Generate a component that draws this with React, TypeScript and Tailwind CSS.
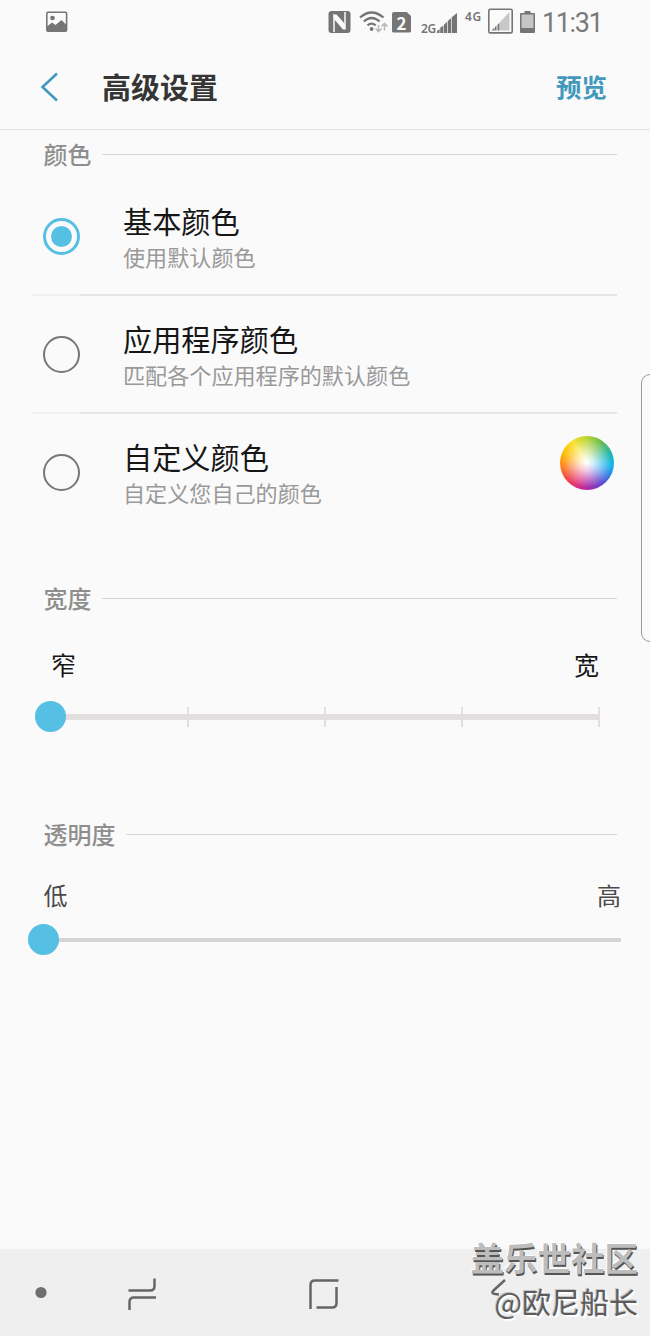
import clsx from "clsx";

const options = [
  { title: "基本颜色", description: "使用默认颜色", checked: true },
  { title: "应用程序颜色", description: "匹配各个应用程序的默认颜色" },
  { title: "自定义颜色", description: "自定义您自己的颜色", wheel: true },
];

function StatusBar() {
  return (
    <div className="h-11 shrink-0 flex items-center text-[#757575]">
      <svg className="ml-[46px] mb-px" width="22" height="22" viewBox="0 0 22 22">
        <rect x="0.8" y="1.3" width="19.8" height="18.8" rx="1.2" fill="none" stroke="#757575" strokeWidth="1.6" />
        <circle cx="6.5" cy="7" r="2.3" fill="#757575" />
        <path d="M1 15.500L6 11.500L9.500 14L15.500 9L20.500 14V20H1Z" fill="#757575" />
      </svg>

      <svg className="ml-auto" width="23" height="22" viewBox="0 0 23 22">
        <rect x="0.5" y="0" width="22" height="22" rx="3" fill="#757575" />
        <path d="M6 21V4.500L17 17V1" fill="none" stroke="#fafafa" strokeWidth="1.500" />
        <path d="M6 3.500H8.500L17 13V18.500H15L6 8Z" fill="#fafafa" />
      </svg>

      <svg className="ml-[8px]" width="30" height="24" viewBox="0 0 30 24">
        <g fill="none" stroke="#757575" strokeWidth="2.2">
          <path d="M1 7.5Q12.500 -2.500 24.500 7.500" />
          <path d="M4.800 11.500Q12.500 4.500 20.700 11.500" />
          <path d="M8.500 15.300Q12.500 11.800 16.700 15.300" />
        </g>
        <circle cx="12.6" cy="19" r="1.900" fill="#757575" />
        <g fill="none" stroke="#b8b8b8" strokeWidth="1.6">
          <path d="M19.500 15V21.500M16.500 18.500L19.500 21.500L22.500 18.500" />
          <path d="M25.500 20.500V13.500M22.500 16.500L25.500 13.500L28.500 16.500" />
        </g>
      </svg>

      <div className="ml-[3px] w-[19px] h-[21px] bg-[#757575] rounded-[2px] [clip-path:polygon(0_0,75%_0,100%_22%,100%_100%,0_100%)] flex items-center justify-center text-[#fafafa] text-[17px] font-bold leading-none">
        2
      </div>

      <div className="ml-[10px] mt-[13px] w-4 text-[12px] leading-none font-semibold tracking-[-0.3px] whitespace-nowrap font-['Noto_Sans']">
        2G
      </div>
      <svg width="20" height="20" viewBox="0 0 20 20" className="mt-[2px]">
        <path
          d="M0 20V18L2.600 16V20ZM3.200 20V14.800L6.400 12.400V20ZM7 20V11.500L10 9V20ZM10.700 20V8L14 5.200V20ZM14.700 20V4.300L20 0V20Z"
          fill="#757575"
        />
      </svg>

      <div className="ml-[8px] mb-[11px] w-[18px] text-[12px] leading-none font-semibold tracking-[0.6px] font-['Noto_Sans']">
        4G
      </div>
      <svg className="ml-[5px] mb-[2px]" width="25" height="26" viewBox="0 0 25 26">
        <rect x="0.8" y="1.3" width="23.400" height="23.600" rx="1.500" fill="none" stroke="#757575" strokeWidth="1.6" />
        <path d="M12 22.500V14L21.500 4V22.500Z" fill="#c8c8c8" />
        <path d="M3.500 22.500L6.500 19.500V22.500ZM7 22.500V19L8.500 17.500V22.500ZM9.500 22.500V16.800L11.500 14.800V22.500Z" fill="#757575" />
      </svg>
      <svg className="ml-[7px]" width="15" height="22" viewBox="0 0 15 22">
        <path d="M4.500 0H10.500V2H14Q15 2 15 3V21Q15 22 14 22H1Q0 22 0 21V3Q0 2 1 2H4.500Z" fill="#757575" />
        <path d="M1.500 3.500H13.500V17H1.500Z" fill="#c5c5c5" />
      </svg>
      <div className="ml-[7px] mr-12 w-[60px] mt-[3px] text-[27px] leading-none tracking-[-1.400px] whitespace-nowrap font-[Roboto] font-normal text-[#7a7a7a]">
        11:31
      </div>
    </div>
  );
}

function SectionTitle({ children }: { children: string }) {
  return (
    <div className="h-[49px] pl-[43.500px] pr-[33px] flex">
      <h2 className="h-[50px] text-[24px] leading-[50px] font-medium text-[#8e8e8e]">{children}</h2>
      <div className="mt-[25px] ml-[10.500px] h-px grow bg-[#d6d6d6]"></div>
    </div>
  );
}

function Thumb({ className }: { className: string }) {
  return <div className={clsx("absolute size-[31px] rounded-full bg-[#56bfe4]", className)}></div>;
}

function NavigationBar() {
  return (
    <nav className="relative mt-auto h-[87px] bg-[#efefef]">
      <svg width="650" height="87" viewBox="0 0 650 87" fill="none" stroke="#666666" strokeWidth="2.5">
        <circle cx="41" cy="43.500" r="5.600" fill="#6f6f6f" stroke="none" />
        <path d="M128.500 41.500H150Q154.500 41.500 154.500 37V29.500M156 48.500H134Q129.500 48.500 129.500 53V61" />
        <path d="M338.500 31.500H315Q310.500 31.500 310.500 36V60M316.500 58.500H332Q336.500 58.500 336.500 54V38" />
        <path d="M505 31L493.500 41.500Q490.500 44.500 495 45L499 45.500" />
      </svg>
      <div className="absolute right-3 -top-[11px] text-right whitespace-nowrap">
        <div className="text-[33.500px] leading-[38px] font-bold text-[#bdbdbd] [text-shadow:1px_2px_0_#555555,-1px_-1px_0_#ffffff]">
          盖乐世社区
        </div>
        <div className="mt-[6px] text-[29px] leading-[38px] text-[#5c5c5c] [text-shadow:-1px_-1px_0_#c4c4c4,1px_1px_0_#ffffff,2px_2px_1px_#ffffff]">
          @欧尼船长
        </div>
      </div>
    </nav>
  );
}

export default function App() {
  return (
    <div className="relative w-[650px] h-[1336px] overflow-hidden flex flex-col bg-[#fafafa] font-['Noto_Sans_CJK_SC',sans-serif]">
      <StatusBar />

      <header className="h-[86px] -mb-px shrink-0 flex items-center border-b border-[#e2e2e2]">
        <svg className="ml-10 mt-px" width="20" height="30" viewBox="0 0 20 30">
          <path d="M17 1.500L2.500 15L17 28.500" fill="none" stroke="#4299bd" strokeWidth="2.600" />
        </svg>
        <h1 className="ml-[42px] text-[29px] leading-none font-bold text-[#353535]">高级设置</h1>
        <button className="ml-auto mr-[43px] mb-px text-[25.500px] leading-none font-bold text-[#4299bd]">预览</button>
      </header>

      <section>
        <SectionTitle>颜色</SectionTitle>

        {options.map((option, index) => (
          <div key={option.title} className="h-[118px] flex flex-col">
            <div className="flex grow pl-[42.500px] pr-9">
              <div
                className={clsx(
                  "mt-[40px] size-[37px] rounded-full flex items-center justify-center",
                  option.checked ? "border-3 border-[#56bfe4]" : "border-2 border-[#777777]"
                )}
              >
                {option.checked && <div className="size-[21px] rounded-full bg-[#56bfe4]"></div>}
              </div>

              <div className="ml-[43.500px] pt-6">
                <h3 className="text-[29.200px] leading-9 text-[#161616]">{option.title}</h3>
                <p className="text-[22.100px] leading-9 text-[#999999]">{option.description}</p>
              </div>

              {option.wheel && (
                <div className="ml-auto mt-[22px] size-[54px] rounded-full bg-[radial-gradient(circle,#ffffff_0%,rgba(255,255,255,0.75)_20%,rgba(255,255,255,0)_65%),conic-gradient(#b9d432,#67bd50_35deg,#22b7a5_65deg,#16b5ef_95deg,#2a8ce9_115deg,#6548cf_145deg,#a62aaa_175deg,#d82c83_200deg,#f0464e_230deg,#ff8719_265deg,#ffb800_290deg,#fbe12d_325deg,#b9d432)]"></div>
              )}
            </div>
            {index < 2 && (
              <div className="ml-8 mr-[33px] h-[2px] flex">
                <div className="h-[2px] w-12 bg-[#f0f0f0]"></div>
                <div className="h-[2px] grow bg-[#e6e6e6]"></div>
              </div>
            )}
          </div>
        ))}
      </section>

      <section className="mt-[41px]">
        <SectionTitle>宽度</SectionTitle>
        <div className="mt-[24px] pl-[51px] pr-[51px] flex justify-between text-[25px] leading-9 text-[#161616]">
          <span>窄</span>
          <span>宽</span>
        </div>
        <div className="relative mt-[25px] ml-[50px] w-[550px] h-5">
          <div className="absolute top-[7px] h-[6px] w-full bg-[#e3dfde]"></div>
          <div className="absolute inset-0 flex justify-between">
            {[0, 1, 2, 3, 4].map((tick) => (
              <div key={tick} className="w-[2px] bg-[#e3dfde]"></div>
            ))}
          </div>
          <Thumb className="-left-[15px] -top-[6px]" />
        </div>
      </section>

      <section className="mt-[82px]">
        <SectionTitle>透明度</SectionTitle>
        <div className="mt-[19px] pl-[43.500px] pr-[29px] flex justify-between text-[24px] leading-9 text-[#4a4a4a]">
          <span>低</span>
          <span>高</span>
        </div>
        <div className="relative mt-[25px] ml-[43px] w-[578px] h-[4px] bg-[#d5d5d5]">
          <Thumb className="-left-[15px] -top-[14px]" />
        </div>
      </section>

      <NavigationBar />

      <div className="absolute left-[641px] top-[374px] w-6 h-[268px] rounded-[9px] border border-[#999999]"></div>
    </div>
  );
}
